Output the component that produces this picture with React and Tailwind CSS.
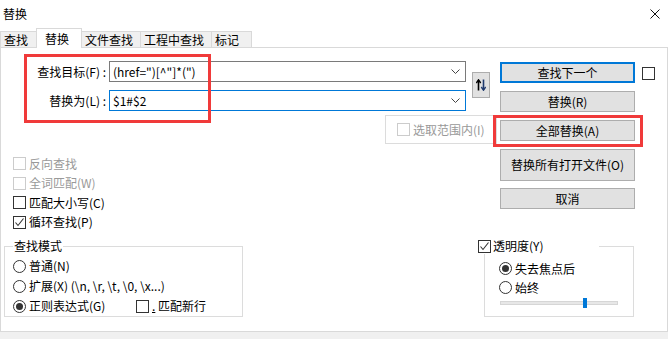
import React from "react";

const CheckBox = ({ checked = false, disabled = false }) => (
  <span
    className={`w-[13px] h-[13px] shrink-0 border bg-white flex items-center justify-center ${
      disabled ? "border-[#cccccc]" : "border-[#333333]"
    }`}
  >
    {checked && (
      <svg width="11" height="11" viewBox="0 0 11 11">
        <polyline
          points="1.5,5.5 4,8.5 9.5,1.5"
          fill="none"
          stroke="#333"
          strokeWidth="1.1"
        />
      </svg>
    )}
  </span>
);

const Radio = ({ checked = false }) => (
  <span className="w-[13px] h-[13px] shrink-0 rounded-full border border-[#333333] bg-white flex items-center justify-center">
    {checked && <span className="w-[7px] h-[7px] rounded-full bg-[#333333]" />}
  </span>
);

const Chevron = () => (
  <svg width="9" height="5" viewBox="0 0 9 5" className="shrink-0">
    <polyline points="0.5,0.5 4.5,4.5 8.5,0.5" fill="none" stroke="#444" strokeWidth="1" />
  </svg>
);

const Combo = ({ value, focused }) => (
  <div
    className={`w-[357px] h-[21px] bg-white border flex items-center justify-between pl-[3px] pr-[5px] ${
      focused ? "border-[#0078d7]" : "border-[#7a7a7a]"
    }`}
  >
    <span className="whitespace-pre">{value}</span>
    <Chevron />
  </div>
);

const Button = ({ children, primary, tall }) => (
  <div
    className={`w-[135px] bg-[#e1e1e1] flex items-center justify-center ${
      tall ? "h-[32px]" : "h-[21px]"
    } ${primary ? "border-2 border-[#0078d7]" : "border border-[#adadad]"}`}
  >
    {children}
  </div>
);

const Tab = ({ label, width, active }) => (
  <div
    className={`-ml-px first:ml-0 border-t border-l border-r border-[#d9d9d9] flex items-center pl-[3px] ${width} ${
      active
        ? "h-[20px] bg-white relative z-10 -mb-px pl-[8px]"
        : "h-[16px] bg-[#f0f0f0]"
    }`}
  >
    {label}
  </div>
);

export default function App() {
  return (
    <div className="w-[668px] h-[339px] bg-white relative overflow-hidden flex flex-col text-[12px] leading-[16px] text-black font-['Noto_Sans_CJK_SC','Noto_Sans',sans-serif]">
      {/* title bar */}
      <div className="h-[28px] shrink-0 flex items-center justify-between pl-[3px] pr-[8px]">
        <span className="text-[12px]">替换</span>
        <svg width="10" height="10" viewBox="0 0 10 10">
          <path d="M0.5 0.5 L9.5 9.5 M9.5 0.5 L0.5 9.5" stroke="#111" strokeWidth="1" />
        </svg>
      </div>

      {/* tabs */}
      <div className="h-[19px] shrink-0 flex items-end">
        <Tab label="查找" width="w-[37px]" />
        <Tab label="替换" width="w-[46px]" active />
        <Tab label="文件查找" width="w-[60px]" />
        <Tab label="工程中查找" width="w-[72px]" />
        <Tab label="标记" width="w-[41px]" />
      </div>

      {/* panel */}
      <div className="h-[285px] shrink-0 border border-[#d9d9d9] bg-white flex flex-col">
        <div className="flex h-[184px]">
          {/* left column */}
          <div className="w-[489px] shrink-0 flex flex-col">
            <div className="flex mt-[13px] items-center">
              <div className="flex flex-col gap-[8px]">
                <div className="flex items-center">
                  <span className="w-[106px] text-right pr-[1px]">查找目标(F) :</span>
                  <div className="ml-[2px]">
                    <Combo value={'(href=")[^"]*(")'} />
                  </div>
                </div>
                <div className="flex items-center">
                  <span className="w-[106px] text-right pr-[1px]">替换为(L) :</span>
                  <div className="ml-[2px]">
                    <Combo value="$1#$2" focused />
                  </div>
                </div>
              </div>
              <div className="ml-[6px] -mt-[3px] w-[18px] h-[26px] bg-[#e1e1e1] border border-[#adadad] flex items-center justify-center">
                <svg width="10" height="12" viewBox="0 0 10 12">
                  <path d="M2.5 11.5 V1.5" stroke="#000" strokeWidth="1.6" />
                  <path d="M0.3 4 L2.5 0.8 L4.7 4" fill="none" stroke="#000" strokeWidth="1.4" />
                  <path d="M7.5 0.5 V10.5" stroke="#1f3a6e" strokeWidth="1.6" />
                  <path d="M5.3 8 L7.5 11.2 L9.7 8" fill="none" stroke="#1f3a6e" strokeWidth="1.4" />
                </svg>
              </div>
            </div>

            <div className="mt-[4px] ml-[384px] w-[112px] h-[29px] border border-[#dcdcdc] flex items-center gap-[3px] pl-[11px] text-[#999999]">
              <CheckBox disabled />
              <span>选取范围内(I)</span>
            </div>

            <div className="mt-[10px] pl-[12px] flex flex-col">
              <div className="h-[19.5px] flex items-center gap-[3px] text-[#999999]">
                <CheckBox disabled />
                <span>反向查找</span>
              </div>
              <div className="h-[19.5px] flex items-center gap-[3px] text-[#999999]">
                <CheckBox disabled />
                <span>全词匹配(W)</span>
              </div>
              <div className="h-[19.5px] flex items-center gap-[3px]">
                <CheckBox />
                <span>匹配大小写(C)</span>
              </div>
              <div className="h-[19.5px] flex items-center gap-[3px]">
                <CheckBox checked />
                <span>循环查找(P)</span>
              </div>
            </div>
          </div>

          {/* right buttons */}
          <div className="ml-[10px] mt-[14px] flex flex-col">
            <Button primary>查找下一个</Button>
            <div className="mt-[8px]">
              <Button>替换(R)</Button>
            </div>
            <div className="mt-[8px]">
              <Button>全部替换(A)</Button>
            </div>
            <div className="mt-[8px]">
              <Button tall>替换所有打开文件(O)</Button>
            </div>
            <div className="mt-[7px]">
              <Button>取消</Button>
            </div>
          </div>

          <div className="ml-[7px] mt-[19px]">
            <CheckBox />
          </div>
        </div>

        {/* group boxes */}
        <div className="flex mt-[14px]">
          <div className="ml-[3px] w-[239px] h-[71px] border border-[#dcdcdc] relative pt-[9px] pl-[8px] flex flex-col">
            <span className="absolute -top-[9px] left-[8px] bg-white px-px">查找模式</span>
            <div className="h-[20px] flex items-center gap-[3px]">
              <Radio />
              <span>普通(N)</span>
            </div>
            <div className="h-[20px] flex items-center gap-[3px]">
              <Radio />
              <span>扩展(X) (\n, \r, \t, \0, \x...)</span>
            </div>
            <div className="h-[20px] flex items-center">
              <div className="w-[123px] flex items-center gap-[3px]">
                <Radio checked />
                <span>正则表达式(G)</span>
              </div>
              <div className="flex items-center gap-[3px]">
                <CheckBox />
                <span>
                  <span className="underline">.</span> 匹配新行
                </span>
              </div>
            </div>
          </div>

          <div className="ml-[241px] w-[150px] h-[71px] border border-[#dcdcdc] relative pt-[12px] pl-[14px] flex flex-col">
            <div className="absolute -top-[9px] -left-[7px] w-[121px] bg-white flex items-center gap-[2px]">
              <CheckBox checked />
              <span>透明度(Y)</span>
            </div>
            <div className="h-[19px] flex items-center gap-[3px]">
              <Radio checked />
              <span>失去焦点后</span>
            </div>
            <div className="h-[19px] flex items-center gap-[3px]">
              <Radio />
              <span>始终</span>
            </div>
            <div className="relative mt-px ml-px w-[118px] h-[10px] flex items-center">
              <div className="w-full h-[4px] bg-[#e7e7e7] border border-[#d6d6d6]" />
              <div className="absolute top-0 left-[83px] w-[4px] h-[10px] bg-[#0078d7]" />
            </div>
          </div>
        </div>
      </div>

      <div className="flex-1 bg-[#f0f0f0]" />

      {/* red annotation boxes */}
      <div className="absolute left-[24px] top-[54px] w-[187px] h-[69px] border-[3px] border-[#f03a3a] pointer-events-none" />
      <div className="absolute left-[493px] top-[115px] w-[150px] h-[32px] border-[3px] border-[#f03a3a] pointer-events-none" />
    </div>
  );
}
